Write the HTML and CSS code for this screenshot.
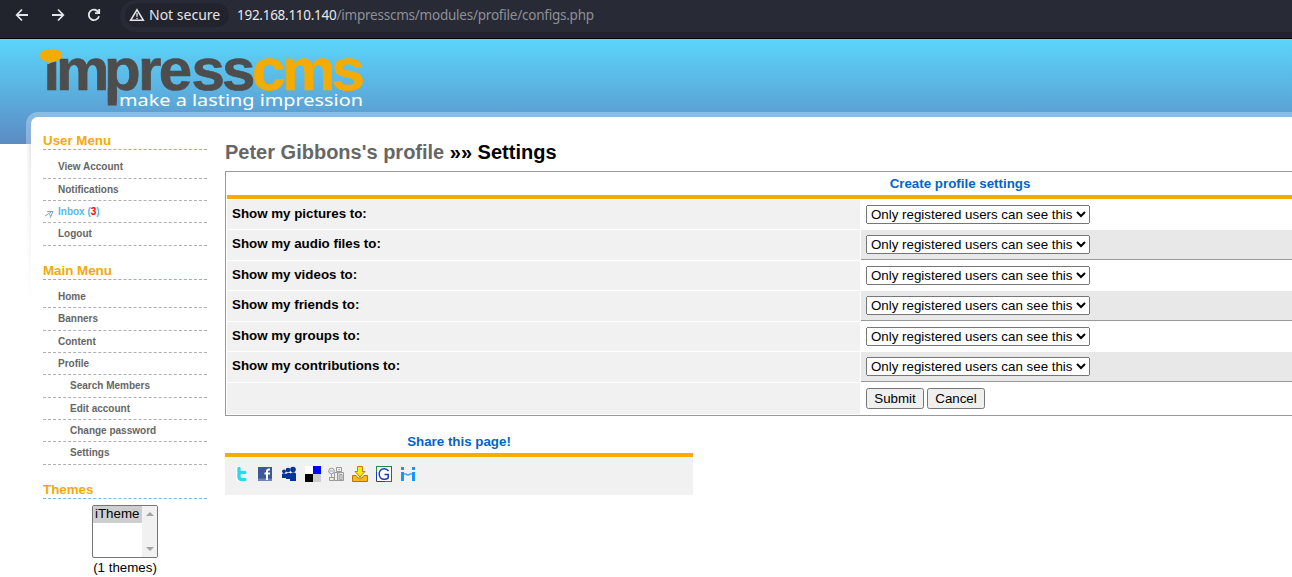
FILE: index.html
```html
<!DOCTYPE html>
<html lang="en">
<head>
<meta charset="utf-8">
<title>Settings</title>
<link rel="stylesheet" href="styles.css">
</head>
<body>
<div class="browser">
  <svg class="nav" width="108" height="30" viewBox="0 0 108 30" fill="none" stroke="#e4e4e8" stroke-width="1.8">
    <path d="M28 15H17M22 9.5L16.700 15L22 20.500"/>
    <path d="M52 15H63M58 9.500L63.300 15L58 20.500"/>
    <path d="M98.500 12.300A5.200 5.200 0 1 0 99 16.300M99.200 9V13.200H95"/>
  </svg>
  <div class="omnibox">
    <div class="chip">
      <svg width="16" height="14" viewBox="0 0 16 14"><path d="M8 1.800L14.300 12.200H1.700Z" fill="none" stroke="#e4e4e8" stroke-width="1.600"/><path d="M8 5V8.800M8 9.800V11.200" stroke="#e4e4e8" stroke-width="1.300"/></svg>
      <span>Not secure</span>
    </div>
    <div class="url"><b>192.168.110.140</b>/impresscms/modules/profile/configs.php</div>
  </div>
</div>
<div class="site">
  <header class="banner">
    <svg class="logo" width="340" height="73" viewBox="30 39 340 73">
      <defs><clipPath id="stem"><path d="M40 67L47 64L57 61V55H260V112H40Z"/></clipPath></defs>
      <g class="wordmark">
        <text x="43.500 56 104 138 158.700 191.500 222" y="90" fill="#4d4d4d" stroke="#4d4d4d" clip-path="url(#stem)">impress</text>
        <text x="252 282 331.500" y="90" fill="#f5ab00" stroke="#f5ab00">cms</text>
      </g>
      <path d="M107.800 88H116.700V105.500H107.800Z" fill="#4d4d4d"/>
      <path d="M51 49C57 49 62 51.500 62 55.500S57 61.500 53 61.500C51 62 50 63.500 47.500 64.500L49 61.500C44 61.500 40 59.500 40 55.500S45 49 51 49Z" fill="#f5ab00"/>
      <text class="tagline" x="119" y="105.500" textLength="244" lengthAdjust="spacingAndGlyphs">make a lasting impression</text>
    </svg>
  </header>
  <div class="panel">
    <aside class="side">
      <section>
        <h3>User Menu</h3>
        <ul>
          <li class="tall">View Account</li>
          <li>Notifications</li>
          <li class="inbox"><svg width="9" height="9" viewBox="0 0 9 9" fill="none" stroke="#72a7dc"><path d="M0 6L6 2M2 1.500H8M5 8L8 1.500M4 4.500L6.500 6"/></svg>Inbox (<em>3</em>)</li>
          <li class="tall">Logout</li>
        </ul>
      </section>
      <section>
        <h3>Main Menu</h3>
        <ul>
          <li>Home</li>
          <li class="tall">Banners</li>
          <li>Content</li>
          <li>Profile</li>
          <li class="sub tall">Search Members</li>
          <li class="sub">Edit account</li>
          <li class="sub">Change password</li>
          <li class="sub tall">Settings</li>
        </ul>
      </section>
      <section>
        <h3>Themes</h3>
        <div class="themes">
          <div class="listbox">
            <div class="choice">iTheme</div>
            <div class="scroll"><i class="up"></i><i class="down"></i></div>
          </div>
          <div>(1 themes)</div>
        </div>
      </section>
    </aside>
    <main class="content">
      <h1><span>Peter Gibbons's profile</span> »» Settings</h1>
      <form class="settings">
        <div class="caption">Create profile settings</div>
        <div class="row"><label>Show my pictures to:</label><div><select><option>Only registered users can see this</option></select></div></div>
        <div class="row even"><label>Show my audio files to:</label><div><select><option>Only registered users can see this</option></select></div></div>
        <div class="row"><label>Show my videos to:</label><div><select><option>Only registered users can see this</option></select></div></div>
        <div class="row even"><label>Show my friends to:</label><div><select><option>Only registered users can see this</option></select></div></div>
        <div class="row"><label>Show my groups to:</label><div><select><option>Only registered users can see this</option></select></div></div>
        <div class="row even"><label>Show my contributions to:</label><div><select><option>Only registered users can see this</option></select></div></div>
        <div class="row actions"><label></label><div><button type="button">Submit</button><button type="button">Cancel</button></div></div>
      </form>
      <div class="share">
        <h4>Share this page!</h4>
        <div class="icons">
          <svg viewBox="0 0 16 16"><path d="M5.500 2.500V10.500Q5.500 13.500 8.500 13.500H12M5.500 6.500H12" fill="none" stroke="#fff" stroke-width="5" stroke-linecap="round"/><path d="M6 2.500V10.500Q6 13.500 9 13.500H12M6 6.500H12" fill="none" stroke="#2bd9ee" stroke-width="3.400" stroke-linecap="round"/></svg>
          <svg viewBox="0 0 16 16"><path d="M1 1H15V15H1Z" fill="#3b5998"/><path d="M1 12.500H15V15H1Z" fill="#6d84b4"/><path d="M13 3.500H12Q10 3.500 10 5.500V14M7.500 7.500H13" fill="none" stroke="#fff" stroke-width="2"/></svg>
          <svg viewBox="0 0 16 16" fill="#003399"><circle cx="3" cy="5.300" r="1.900"/><circle cx="7" cy="4" r="2.300"/><circle cx="12" cy="3.500" r="2.800"/><path d="M1 8Q3 6.500 5 8V12H1ZM5 8Q8 5.500 10 8V13H5ZM9 8Q12 5 15 7.500V15H9Z"/></svg>
          <svg viewBox="0 0 16 16"><path d="M0 0H8V8H0Z" fill="#fff"/><path d="M8 0H16V8H8Z" fill="#00f"/><path d="M0 8H8V16H0Z" fill="#000"/><path d="M8 8H16V16H8Z" fill="#ccc"/></svg>
          <svg class="tight" viewBox="0 0 16 16" fill="#eee" stroke="#999"><circle cx="3.500" cy="5" r="2.800"/><path d="M3.500 8V11M1.500 11.500H6V14.500H1.500ZM8.500 1.500H13.500V5.500H8.500ZM6.500 6.500H9.500V14.500H6.500ZM9.500 6.500H15.500V14.500H9.500ZM12 8.500H14V14H12Z"/><path d="M10.500 3.500H12M2 5H5M11 7V14" stroke-width=".8"/></svg>
          <svg viewBox="0 0 16 16"><path d="M.500 9.500H4L6 12H10L12 9.500H15.500V15.500H.500Z" fill="#ffb51c" stroke="#c76a09"/><path d="M5.500 .500H10.500V5.500H13L8 11L3 5.500H5.500Z" fill="#ffea00" stroke="#c97b0a"/></svg>
          <svg viewBox="0 0 16 16" fill="none"><path d="M.500 .500H15.500V15.500H.500Z" fill="#fff"/><path d="M0 .500H15" stroke="#288b38"/><path d="M.500 0V15.500H15" stroke="#1741ad"/><path d="M15.500 0V16" stroke="#c92424"/><path d="M.500 0V6" stroke="#288b38"/><path d="M9 15.500H15" stroke="#288b38"/><path d="M12.500 5Q11 2.700 8.300 2.700C1.500 2.700 1.500 13.300 8.300 13.300Q11 13.300 12.200 12V8.500H8.500" stroke="#1741ad" stroke-width="1.500"/></svg>
          <svg viewBox="0 0 16 16" fill="#1695fa"><path d="M1 1H4V4H1ZM12 1H15V4H12ZM1 6H4V15H1ZM12 6H15V15H12Z"/><path d="M4 8H6Q8 10 10 8H12" fill="none" stroke="#3fa9fb" stroke-width="1.500"/></svg>
        </div>
      </div>
    </main>
  </div>
</div>
</body>
</html>
```
FILE: styles.css
```css
* { box-sizing: border-box; }
body {
  margin: 0;
  height: 577px;
  overflow: hidden;
  background: #fff;
  font: 13.33px "Liberation Sans", Arial, sans-serif;
  color: #000;
}
.browser {
  display: flex;
  height: 39px;
  background: #22242d;
  border-bottom: 1px solid #000;
}
.nav { flex: none; display: block; }
.omnibox {
  display: flex;
  flex: 1;
  height: 32px;
  margin-left: 12px;
  background: #282a35;
  border-radius: 16px 0 0 16px;
  font: 14px/30px "Noto Sans", sans-serif;
}
.chip {
  display: flex;
  align-items: center;
  height: 24px;
  width: 104px;
  margin: 3px 0 0 5px;
  padding-left: 4px;
  gap: 4px;
  border-radius: 12px;
  background: #22242d;
  color: #e4e4e8;
  white-space: nowrap;
}
.url { margin-left: 8px; color: #8f9097; white-space: nowrap; font-size: 13.5px; letter-spacing: -.23px; }
.url b { font-weight: 400; color: #e8e8ec; letter-spacing: -.27px; }

.site {
  height: 538px;
  overflow: hidden;
  background: linear-gradient(#5bd5fb, #5b8bc3) top / 100% 105px no-repeat #fff;
}
.banner { height: 73px; padding-left: 30px; }
.logo { display: block; }
.wordmark { font: bold 60px "Liberation Sans", sans-serif; stroke-width: .7; }
.tagline { font: 16px "Noto Sans", sans-serif; fill: #fff; }

.panel {
  display: flex;
  height: 465px;
  margin-left: 26px;
  padding: 5px 0 0 5px;
  border-radius: 12px 0 0 0;
  background:
    linear-gradient(#fff, #fff) 5px 20px / 100% 100% no-repeat,
    radial-gradient(circle at 7px 7px, #fff 6.5px, transparent 7.5px) 5px 5px / 7px 7px no-repeat,
    linear-gradient(#fff, #fff) 12px 5px / 100% 15px no-repeat,
    linear-gradient(#fff, #fff) 5px 12px / 8px 10px no-repeat,
    linear-gradient(rgba(255,255,255,.3), rgba(255,255,255,.3)) 0 0 / 100% 32px no-repeat,
    linear-gradient(90deg, #fff, transparent 5px) 0 32px / 5px 160px no-repeat,
    linear-gradient(#e6e6e6, #fff) 0 32px / 5px 160px no-repeat;
}
.side { flex: none; width: 176px; padding: 15px 0 0 12px; }
.side section { margin-bottom: 16px; }
h3 {
  height: 18px;
  margin: 0;
  border-bottom: 1px dashed #80b5dc;
  color: #f3a90b;
  font-size: 13.33px;
  line-height: 17px;
}
ul { margin: 0; padding: 6px 0 0; list-style: none; }
li {
  position: relative;
  height: 22px;
  padding-left: 15px;
  border-bottom: 1px dashed #b0b0b0;
  color: #666;
  font: bold 10px/21px "Liberation Sans", sans-serif;
}
.tall { height: 23px; }
.sub { padding-left: 27px; }
.inbox { color: #5ab8e4; }
.inbox svg { position: absolute; left: 2px; top: 9px; }
em { font-style: normal; color: #f00; }
.themes { padding-top: 6px; text-align: center; line-height: 18px; }
.listbox {
  display: flex;
  width: 66px;
  height: 53px;
  margin: 0 auto 1px;
  border: 1px solid #767676;
  border-radius: 2px;
  overflow: hidden;
}
.choice { width: 49px; height: 17px; padding-left: 2px; background: #cecece; line-height: 16px; text-align: left; }
.scroll {
  display: flex;
  flex-direction: column;
  justify-content: space-between;
  align-items: center;
  width: 15px;
  padding: 6px 0;
  background: #f1f1f1;
}
.scroll i { border: 4px solid transparent; }
.up { border-top: 0 !important; border-bottom-color: #a3a3a3 !important; }
.down { border-bottom: 0 !important; border-top-color: #a3a3a3 !important; }

.content { flex: none; width: 1270px; padding: 23px 0 0 18px; }
h1 { height: 31px; margin: 0; font-size: 20px; line-height: 24px; }
h1 span { color: #666; }
.settings {
  display: grid;
  gap: 1px;
  width: 1270px;
  height: 245px;
  padding: 0 1px 0;
  border: 1px solid #999;
  align-content: start;
}
.caption {
  width: 1466px;
  height: 27px;
  border-bottom: 4px solid #f5ab00;
  color: #0264cb;
  font-weight: bold;
  line-height: 24px;
  text-align: center;
}
.row { display: grid; grid-template-columns: 633px 1fr; gap: 1px; height: 29px; }
.row label { padding: 5px; background: #f1f1f1; font-weight: bold; line-height: 17px; }
.row > div { display: flex; align-items: flex-start; gap: 3px; padding: 5px; }
.even { height: 30px; }
.even > div { background: #e8e8e8; border-bottom: 1px solid #999; }
.actions { height: 31px; }
select { width: 224px; height: 19px; margin: 0; font: 13.33px "Liberation Sans", sans-serif; }
button { width: 58px; height: 21px; margin: 0; padding: 0; font: 13.33px "Liberation Sans", sans-serif; }

.share { width: 468px; margin-top: 16px; }
h4 {
  height: 25px;
  margin: 0;
  border-bottom: 4px solid #f5ab00;
  color: #0264cb;
  font-size: 13.33px;
  line-height: 19px;
  text-align: center;
}
.icons { display: flex; gap: 8px; height: 38px; padding: 9px 8px; background: #f1f1f1; }
.icons svg { width: 16px; height: 16px; }
.icons .tight { margin-left: -1px; }
```
